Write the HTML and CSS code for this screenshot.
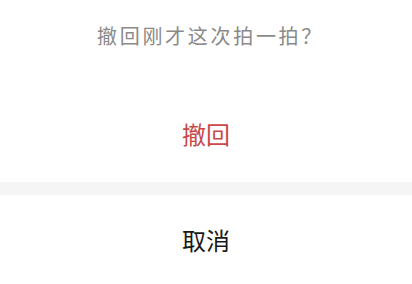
FILE: index.html
```html
<!DOCTYPE html>
<html lang="zh-CN">
<head>
<meta charset="utf-8">
<link rel="stylesheet" href="styles.css">
</head>
<body>
<div class="sheet">
  <div class="sheet-title">撤回刚才这次拍一拍？</div>
  <div class="sheet-action danger">撤回</div>
  <div class="sheet-gap"></div>
  <div class="sheet-action cancel">取消</div>
</div>
</body>
</html>
```
FILE: styles.css
```css
html, body {
  margin: 0;
  padding: 0;
  background: #ffffff;
}
.sheet {
  width: 412px;
  height: 284px;
  display: flex;
  flex-direction: column;
  font-family: "Noto Sans CJK SC", "Noto Sans", sans-serif;
  background: #ffffff;
}
.sheet-title {
  height: 84px;
  box-sizing: border-box;
  padding-top: 22px;
  padding-left: 9px;
  line-height: 28px;
  font-size: 20px;
  letter-spacing: 2.7px;
  color: #8a8a8a;
  text-align: center;
}
.sheet-action {
  display: flex;
  align-items: center;
  justify-content: center;
  font-size: 24px;
}
.danger {
  height: 98px;
  color: #c94848;
}
.sheet-gap {
  height: 13px;
  background: #f5f5f5;
}
.cancel {
  flex: 1;
  color: #1a1a1a;
}
```
